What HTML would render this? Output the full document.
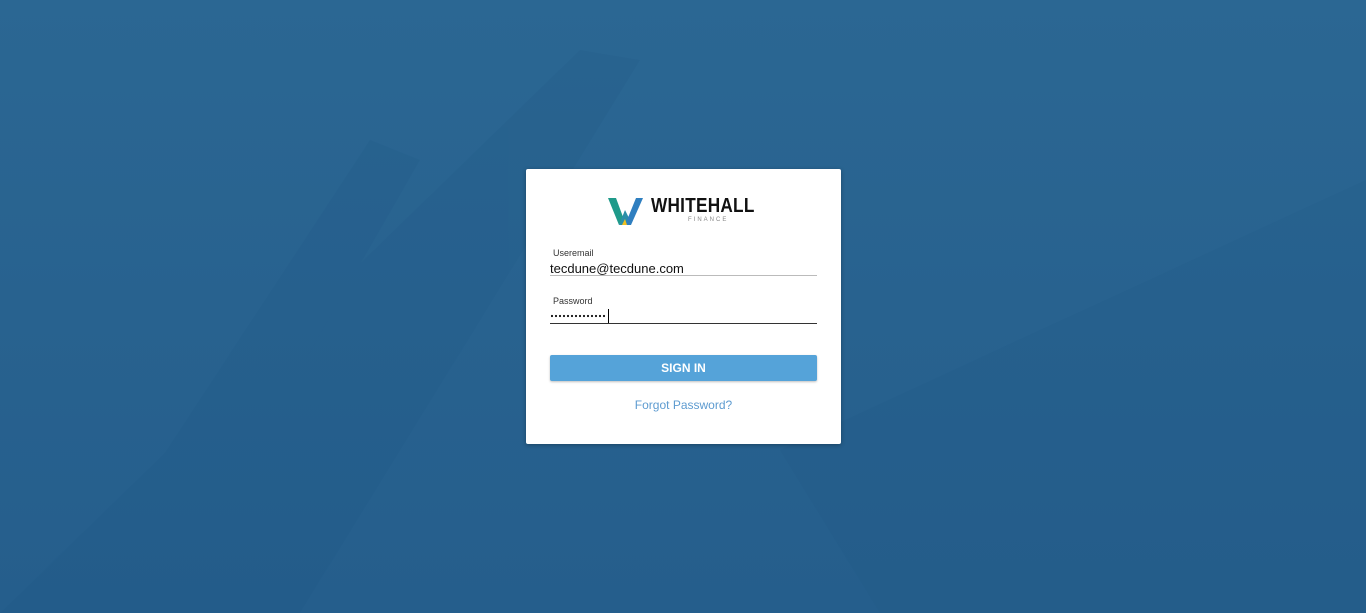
<!DOCTYPE html>
<html><head><meta charset="utf-8"><style>
html,body{margin:0;padding:0}
body{width:1366px;height:613px;overflow:hidden;position:relative;font-family:"Liberation Sans",Arial,sans-serif;
background:linear-gradient(180deg,#2b6793 0%,#28628f 50%,#255e8c 100%);}
.bg{position:absolute;inset:0}
.card{position:absolute;left:526px;top:169px;width:315px;height:275px;background:#fff;border-radius:2px;box-shadow:0 1px 4px rgba(0,0,0,.3)}
.lbl{position:absolute;left:27px;font-size:9px;color:#333}
.val{position:absolute;left:24px;font-size:13px;color:#111}
.line{position:absolute;left:24px;width:267px}
.btn{position:absolute;left:24px;top:186px;width:267px;height:26px;background:#55a3d9;border-radius:2px;box-shadow:0 1px 2px rgba(0,0,0,.25);color:#fff;font-weight:bold;font-size:12px;text-align:center;line-height:26px}
.fp{position:absolute;left:0;width:315px;top:229px;text-align:center;font-size:12px;color:#5d9bd0}
</style></head><body>
<svg class="bg" width="1366" height="613">
<g fill="#1f5886" opacity=".18">
<polygon points="0,613 580,50 640,60 300,613"/>
<polygon points="60,613 370,140 420,160 160,613"/>
<polygon points="780,450 1366,180 1366,613 880,613"/>
</g>
</svg>
<div class="card">
<svg style="position:absolute;left:82px;top:29px" width="36" height="27" viewBox="0 0 36 27">
<polygon points="0,0 8,0 15,19 11,27" fill="#1f9a8a"/>
<polygon points="11,27 17,12 21,20 17,27" fill="#2a8fa8"/>
<polygon points="17,27 28,0 35,0 23,27" fill="#2f7fc0"/>
<polygon points="14,27 17,21 19,27" fill="#f0c020"/>
</svg>
<div style="position:absolute;left:125px;top:26px;width:140px;font-size:20px;font-weight:900;letter-spacing:0.3px;color:#111;transform:scaleX(0.86);transform-origin:left top">WHITEHALL</div>
<div style="position:absolute;left:162px;top:48px;font-size:6px;letter-spacing:2px;color:#888">FINANCE</div>
<div class="lbl" style="top:79px">Useremail</div>
<div class="val" style="top:92px">tecdune@tecdune.com</div>
<div class="line" style="top:106px;border-top:1px solid #bbb"></div>
<div class="lbl" style="top:127px">Password</div>
<svg style="position:absolute;left:25px;top:145px" width="58" height="4">
<g fill="#111">
<circle cx="1" cy="2" r="1.1"/><circle cx="5" cy="2" r="1.1"/><circle cx="9" cy="2" r="1.1"/><circle cx="13" cy="2" r="1.1"/><circle cx="17" cy="2" r="1.1"/><circle cx="21" cy="2" r="1.1"/><circle cx="25" cy="2" r="1.1"/><circle cx="29" cy="2" r="1.1"/><circle cx="33" cy="2" r="1.1"/><circle cx="37" cy="2" r="1.1"/><circle cx="41" cy="2" r="1.1"/><circle cx="45" cy="2" r="1.1"/><circle cx="49" cy="2" r="1.1"/><circle cx="53" cy="2" r="1.1"/>
</g></svg>
<div style="position:absolute;left:82px;top:140px;width:1px;height:14px;background:#000"></div>
<div class="line" style="top:154px;border-top:1px solid #333"></div>
<div class="btn">SIGN IN</div>
<div class="fp">Forgot Password?</div>
</div>
</body></html>
